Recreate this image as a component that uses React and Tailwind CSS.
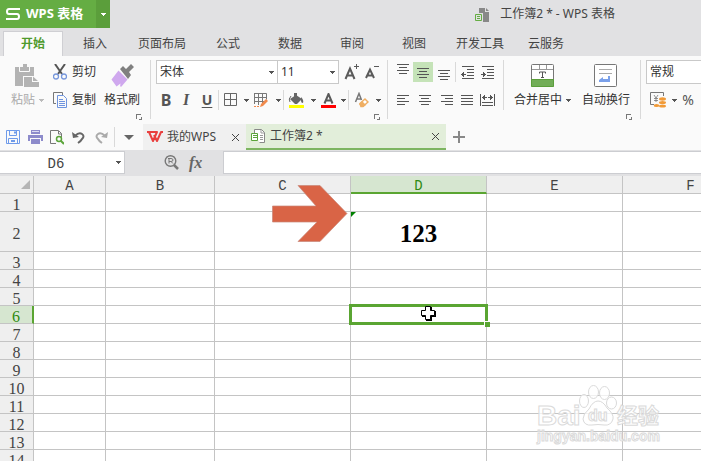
import React from "react";

function Caret({ className = "text-[#555]" }) {
  return (
    <svg width="5" height="3" viewBox="0 0 5 3" className={`shrink-0 ${className}`} fill="currentColor" shapeRendering="crispEdges">
      <path d="M0 0h5v1H4v1H3v1H2V2H1V1H0z" />
    </svg>
  );
}

function Sep({ className = "h-5" }) {
  return <div className={`w-px shrink-0 bg-[#d9d9d9] ${className}`} />;
}

function Launcher({ label }) {
  return (
    <button aria-label={label} className="absolute bottom-[2px] right-2 text-[#777]">
      <svg width="6" height="6" viewBox="0 0 6 6" fill="none" stroke="currentColor" shapeRendering="crispEdges">
        <path d="M.5 5V.5H5M2.500 5.500H5.500V2.500" />
      </svg>
    </button>
  );
}

function Tool({ label, children, className = "w-5 h-5" }) {
  return (
    <button aria-label={label} className={`flex shrink-0 items-center justify-center ${className}`}>
      {children}
    </button>
  );
}

function Lines({ rows, width = 12, height = 11 }) {
  return (
    <svg width={width} height={height} viewBox={`0 0 ${width} ${height}`} fill="#555" shapeRendering="crispEdges">
      {rows.map(([x, y, w], i) => (
        <rect key={i} x={x} y={y} width={w} height="1" />
      ))}
    </svg>
  );
}

function Indent({ out }) {
  return (
    <svg width="14" height="13" viewBox="0 0 14 13" fill="#555" shapeRendering="crispEdges">
      <path d="M1 0h12v1H1zM6 3h7v1H6zM6 6h7v1H6zM6 9h7v1H6zM1 12h12v1H1z" />
      {out ? <path d="M0 8h1V7h1V6h1v2h2v1H3v2H2v-1H1V9H0z" /> : <path d="M5 8H4V7H3V6H2v2H0v1h2v2h1v-1h1V9h1z" />}
    </svg>
  );
}

function TitleBar() {
  return (
    <header className="relative flex h-7 shrink-0 items-start bg-[#e1e1e3]">
      <button className="flex h-7 w-24 items-center gap-1.5 whitespace-nowrap bg-[#65ad43] pl-1.5 text-[13px] font-bold text-white">
        <svg width="14" height="12" viewBox="0 0 14 12" fill="none" stroke="#fff" strokeWidth="2">
          <path d="M14 1H3Q1 1 1 3.500T3 6H11Q13 6 13 8.500T11 11H0" />
        </svg>
        WPS 表格
      </button>
      <button aria-label="菜单" className="flex h-7 w-3.5 items-center justify-center bg-[#5b9e3b]">
        <Caret className="text-white" />
      </button>
      <div className="flex h-7 flex-1 items-center justify-end gap-2.5 pr-[86px] text-[#444]">
        <svg width="15" height="15" viewBox="0 0 15 15">
          <path d="M4 1h6v4h4v10H8V6H4z" fill="#888" />
          <path d="M11 1l3 3h-3z" fill="#888" />
          <path d="M.5 7.500h6v6h-6zM2 9.500h3M2 11.500h3" fill="none" stroke="#65ad43" />
        </svg>
        <h1>工作簿2 * - WPS 表格</h1>
      </div>
    </header>
  );
}

const tabs = [
  ["插入", "w-16"],
  ["页面布局", "w-[70px]"],
  ["公式", "w-[62px]"],
  ["数据", "w-[62px]"],
  ["审阅", "w-[62px]"],
  ["视图", "w-[62px]"],
  ["开发工具", "w-[70px]"],
  ["云服务", "w-[62px]"],
];

function Tabs() {
  return (
    <nav className="flex h-7 shrink-0 items-end bg-[#e1e1e3] pl-[3px] text-[#444]">
      <button className="h-[25px] w-[60px] border border-b-0 border-[#cfcfd3] bg-[#fafafa] font-bold text-[#4f9a2d]">开始</button>
      {tabs.map(([t, w]) => (
        <button key={t} className={`h-[25px] whitespace-nowrap ${w}`}>{t}</button>
      ))}
    </nav>
  );
}

function ClipboardGroup() {
  return (
    <section className="relative flex w-[150px] shrink-0 text-[#333]">
      <button className="flex w-11 shrink-0 flex-col items-end pt-2 text-[#aaa]">
        <svg width="24" height="24" viewBox="0 0 24 24" className="mr-[5px]">
          <path d="M0 3h19v9H8v10H0z" fill="#b3b3b3" />
          <path d="M4.500 2v5.500h10V2" fill="none" stroke="#fafafa" />
          <path d="M5 3h3V0h4v3h2v4H5z" fill="#b3b3b3" />
          <path d="M9 13h8v5h7v5H9z" fill="#b3b3b3" />
          <path d="M18 12.500l5 4.500h-5z" fill="#b3b3b3" />
        </svg>
        <span className="flex h-6 items-center gap-1">粘贴<Caret className="text-[#bbb]" /></span>
      </button>
      <div className="flex w-[53px] flex-col gap-1 pl-[9px] pt-1">
        <button className="flex h-6 items-center gap-[5px] whitespace-nowrap">
          <svg width="14" height="16" viewBox="0 0 14 16" fill="none" className="shrink-0">
            <path d="M2 0l7 10M12 0L5 10" stroke="#555" strokeWidth="2" />
            <circle cx="3" cy="12.500" r="2.500" stroke="#7797dc" strokeWidth="1.300" />
            <circle cx="11" cy="12.500" r="2.500" stroke="#7797dc" strokeWidth="1.300" />
          </svg>
          剪切
        </button>
        <button className="flex h-6 items-center gap-[5px] whitespace-nowrap">
          <svg width="14" height="16" viewBox="0 0 14 16" fill="none" className="shrink-0">
            <path d="M3 11.500H.5V.5h9V3" stroke="#777" />
            <path d="M4.500 3.500h6l3 3v9h-9z" stroke="#6f94df" />
            <path d="M6 7.500h4M6 9.500h6M6 11.500h6M6 13.500h6" stroke="#6f94df" />
          </svg>
          复制
        </button>
      </div>
      <button className="flex w-[50px] flex-col items-center pt-2">
        <svg width="24" height="24" viewBox="0 0 24 24">
          <path d="M10 5l3-3 3 3 5-5 3 3-5 5 2 3-3 4z" fill="#808080" />
          <path d="M8.500 6.500l9 9-6 7q-2 1-1-3l-4 3-5-7z" fill="#cfa8ee" />
        </svg>
        <span className="flex h-6 items-center whitespace-nowrap">格式刷</span>
      </button>
      <Launcher label="剪贴板选项" />
    </section>
  );
}

function Combo({ label, value, className }) {
  return (
    <label className={`relative flex items-center border border-[#c9c9c9] bg-white ${className}`}>
      <select aria-label={label} className="h-full w-full appearance-none bg-transparent pl-[3px] text-[#333] outline-none">
        <option>{value}</option>
      </select>
      <Caret className="pointer-events-none absolute right-[3px] text-[#555]" />
    </label>
  );
}

function Drop({ label }) {
  return <Tool label={label} className="h-5 w-2.5"><Caret /></Tool>;
}

function FontGroup() {
  return (
    <section className="relative flex w-[237px] shrink-0 flex-col gap-1 pl-[5px] pt-1 text-[#555]">
      <div className="flex h-6 items-center">
        <Combo label="字体" value="宋体" className="h-6 w-[122px]" />
        <Combo label="字号" value="11" className="-ml-px h-6 w-[62px]" />
        <Tool label="增大字号" className="ml-[3px] h-6 w-5">
          <svg width="16" height="16" viewBox="0 0 16 16" fill="none" stroke="#5a5a5a">
            <path d="M1.500 15L6 4.500 10.500 15M3 11.500h6" strokeWidth="2" />
            <path d="M10 2.500h5M12.500 0v5" />
          </svg>
        </Tool>
        <Tool label="减小字号" className="h-6 w-5">
          <svg width="14" height="16" viewBox="0 0 14 16" fill="none" stroke="#5a5a5a">
            <path d="M1 14L5 5.500 9 14M2.500 11.500h5" strokeWidth="2" />
            <path d="M9 2.500h5" />
          </svg>
        </Tool>
      </div>
      <div className="flex h-6 items-center">
        <Tool label="加粗"><b className="text-base">B</b></Tool>
        <Tool label="倾斜"><i className="font-['Liberation_Serif',serif] text-base font-bold">I</i></Tool>
        <Tool label="下划线" className="h-5 w-[22px]"><b className="text-sm underline underline-offset-2">U</b></Tool>
        <Sep />
        <Tool label="边框" className="h-5 w-6">
          <svg width="14" height="14" viewBox="0 0 14 14" fill="none" stroke="#666"><path d="M.5.5h12v12H.5zM6.500 0v13M0 6.500h13" /></svg>
        </Tool>
        <Tool label="边框样式" className="h-5 w-1.5"><Caret /></Tool>
        <Tool label="绘制边框" className="h-5 w-6">
          <svg width="16" height="15" viewBox="0 0 16 15" fill="none">
            <path d="M1.500.5h12v6M1.500 0v11M1 4.500h12M1 8.500h10M5.500 0v12M9.500 0v11" stroke="#777" />
            <path d="M7 14l1-3 5-5 2 2-5 5z" fill="#f18a4c" />
            <path d="M1 13.500h2M4 13.500h2" stroke="#f18a4c" />
          </svg>
        </Tool>
        <Drop label="绘制选项" />
        <Sep />
        <Tool label="填充颜色" className="h-5 w-6">
          <svg width="16" height="15" viewBox="0 0 16 15">
            <path d="M2 6l6-4 6 4-5 5H7z" fill="#666" />
            <path d="M6 0h3v6H6z" fill="#666" />
            <path d="M3 3q-3 3-1 6" fill="none" stroke="#666" />
            <path d="M13 4q3 3 2 6-2 0-2-2z" fill="#666" />
            <path d="M1 12h15v3H1z" fill="#ff0" />
          </svg>
        </Tool>
        <Drop label="填充选项" />
        <Tool label="字体颜色" className="h-5 w-5">
          <svg width="15" height="15" viewBox="0 0 15 15">
            <path d="M3.500 10.500L7.500 1l4 9.500M5 7.500h5" fill="none" stroke="#5a5a5a" strokeWidth="2" />
            <path d="M0 12h15v3H0z" fill="red" />
          </svg>
        </Tool>
        <Drop label="颜色选项" />
        <Sep />
        <Tool label="清除格式" className="h-5 w-6">
          <svg width="15" height="16" viewBox="0 0 15 16" fill="none">
            <path d="M1.500 10L5 1.500 7.500 8M3 7h4" stroke="#777" strokeWidth="1.500" />
            <path d="M6 11.500L11 7l3 3-5 4.500H7z" fill="#fff" stroke="#efae62" strokeWidth="1.500" />
            <path d="M8 9l4 4-3 2H7l-2-3z" fill="#efae62" />
          </svg>
        </Tool>
        <Drop label="清除选项" />
      </div>
      <Launcher label="字体选项" />
    </section>
  );
}

function AlignGroup() {
  return (
    <section className="flex w-[116px] shrink-0 flex-col gap-1 pl-[5px] pt-1">
      <div className="flex h-6 items-center">
        <Tool label="顶端对齐"><Lines rows={[[0, 0, 12], [2, 3, 8], [0, 6, 12], [2, 9, 8]]} height={16} /></Tool>
        <Tool label="垂直居中" className="h-5 w-5 bg-[#c5e3b8]"><Lines rows={[[0, 1, 12], [2, 4, 8], [0, 7, 12], [2, 10, 8]]} /></Tool>
        <Tool label="底端对齐" className="h-5 w-[22px]"><Lines rows={[[0, 6, 12], [2, 9, 8], [0, 12, 12], [2, 15, 8]]} height={16} /></Tool>
        <Sep />
        <Tool label="减少缩进" className="ml-0.5 h-5 w-5"><Indent out /></Tool>
        <Tool label="增加缩进"><Indent /></Tool>
      </div>
      <div className="flex h-6 items-center">
        <Tool label="左对齐"><Lines rows={[[0, 0, 12], [0, 3, 8], [0, 6, 12], [0, 9, 8]]} height={10} /></Tool>
        <Tool label="居中" className="h-5 w-6"><Lines rows={[[0, 0, 12], [2, 3, 8], [0, 6, 12], [2, 9, 8]]} height={10} /></Tool>
        <Tool label="右对齐"><Lines rows={[[0, 0, 12], [4, 3, 8], [0, 6, 12], [4, 9, 8]]} height={10} /></Tool>
        <Tool label="两端对齐"><Lines rows={[[0, 0, 12], [0, 3, 12], [0, 6, 12], [0, 9, 12]]} height={10} /></Tool>
        <Tool label="分散对齐">
          <svg width="15" height="12" viewBox="0 0 15 12" fill="#555" shapeRendering="crispEdges">
            <path d="M0 0h1v12H0zM14 0h1v12h-1zM2 8h11v1H2zM2 11h11v1H2zM2 3h1V2h1V1h1v2h2v1H5v2H4V5H3V4H2zM13 3h-1V2h-1V1h-1v2H8v1h2v2h1V5h1V4h1z" />
          </svg>
        </Tool>
      </div>
    </section>
  );
}

function CellGroup() {
  return (
    <section className="relative flex w-[136px] shrink-0 gap-2 pl-2.5 text-[#333]">
      <button className="flex w-[60px] flex-col pt-2">
        <svg width="24" height="24" viewBox="0 0 24 24" className="ml-[17px]">
          <rect x=".5" y=".5" width="22" height="22" rx="1" fill="#fff" stroke="#777" />
          <path d="M1 5.500h21M8.500 1v4M15.500 1v4" stroke="#999" />
          <path d="M.5 15.500h22v7H.5z" fill="#72ad58" stroke="#5b9e3b" />
          <path d="M8.500 9.500V8h6v1.500M11.500 8v5.500M10 13.500h3" fill="none" stroke="#555" />
        </svg>
        <span className="flex h-6 items-center gap-1 whitespace-nowrap">合并居中<Caret /></span>
      </button>
      <button className="flex w-12 flex-col items-center pt-2">
        <svg width="24" height="24" viewBox="0 0 24 24" fill="none">
          <rect x=".5" y=".5" width="22" height="22" rx="1" fill="#fff" stroke="#777" />
          <path d="M5 5.500h13M5 9.500h13" stroke="#aaa" />
          <path d="M5 16l4-3v2h5v-3h2v6H5z" fill="#7aa0ea" />
        </svg>
        <span className="flex h-6 items-center whitespace-nowrap">自动换行</span>
      </button>
      <Launcher label="对齐选项" />
    </section>
  );
}

function NumberGroup() {
  return (
    <section className="flex flex-1 flex-col gap-1 overflow-hidden pl-[5px] pt-1">
      <Combo label="数字格式" value="常规" className="h-6 w-[100px] shrink-0" />
      <div className="flex h-6 items-center">
        <Tool label="货币" className="h-5 w-6">
          <svg width="17" height="16" viewBox="0 0 17 16" fill="none">
            <path d="M4 12.500H.5V.5h13V4" stroke="#777" />
            <path d="M4 3l2 3 2-3M6 6v4M4 6.500h4M4 8.500h4" stroke="#777" strokeWidth=".8" />
            <ellipse cx="12.500" cy="7" rx="3.500" ry="1.700" fill="#f19a37" />
            <ellipse cx="12.500" cy="10.500" rx="3.500" ry="1.500" fill="#f19a37" />
            <ellipse cx="12.500" cy="14" rx="3.500" ry="1.600" fill="#f19a37" />
            <ellipse cx="6.500" cy="13.500" rx="2.800" ry="1.600" fill="#f19a37" />
          </svg>
        </Tool>
        <Tool label="货币选项" className="h-5 w-2"><Caret /></Tool>
        <Tool label="百分比"><span className="text-sm text-[#555]">%</span></Tool>
      </div>
    </section>
  );
}

function Close({ label }) {
  return (
    <button aria-label={label} className="ml-auto mr-1.5">
      <svg width="9" height="9" viewBox="0 0 9 9" stroke="#444"><path d="M1 1l7 7M8 1L1 8" /></svg>
    </button>
  );
}

function QuickBar() {
  return (
    <div className="flex h-7 shrink-0 items-end bg-[#fafafa] text-[#444]">
      <div className="flex h-[26px] w-[143px] shrink-0 items-center pl-0.5">
        <Tool label="保存" className="h-5 w-[22px]">
          <svg width="14" height="14" viewBox="0 0 14 14" fill="none" stroke="#6f9bea">
            <path d="M.5.5h13v13H.5zM3.500 1v4.500h7V1M2.500 13V8.500h9V13" /><path d="M8 2.500h2M5 11h4" strokeWidth="2" />
          </svg>
        </Tool>
        <Tool label="打印" className="h-5 w-[22px]">
          <svg width="15" height="14" viewBox="0 0 15 14"><path d="M3 0h9v4H3zM0 5h15v6h-2V8H2v3H0zM3 9h9v5H3z" fill="#8d8bcb" /><path d="M4 1.500h7" stroke="#dcdcf2" /></svg>
        </Tool>
        <Tool label="打印预览" className="h-5 w-[22px]">
          <svg width="14" height="15" viewBox="0 0 14 15" fill="none">
            <path d="M6 13.500H.5V.5h8l3 3V7M8.500 1v3h3" stroke="#777" /><circle cx="9" cy="9" r="2.500" stroke="#5ba43a" strokeWidth="1.500" /><path d="M11 11l3 3" stroke="#5ba43a" strokeWidth="2" />
          </svg>
        </Tool>
        <Tool label="撤销" className="h-5 w-[22px]">
          <svg width="14" height="13" viewBox="0 0 14 13" fill="none"><path d="M3 5q4-4 7-2t0 5q-1 2-4 4" stroke="#666" strokeWidth="2" /><path d="M0 1l1 6 6-1z" fill="#666" /></svg>
        </Tool>
        <Tool label="恢复" className="h-5 w-[22px]">
          <svg width="14" height="13" viewBox="0 0 14 13" fill="none"><path d="M11 5Q7 1 4 3t0 5q1 2 4 4" stroke="#aaa" strokeWidth="2" /><path d="M14 1l-1 6-6-1z" fill="#aaa" /></svg>
        </Tool>
        <div className="w-1" />
        <Sep />
        <Tool label="更多" className="h-5 w-7"><svg width="10" height="5" viewBox="0 0 10 5"><path d="M0 0h10L5 5z" fill="#666" /></svg></Tool>
      </div>
      <div className="flex h-[26px] w-[103px] shrink-0 items-center gap-1 bg-[#f0f0f0] pl-1">
        <svg width="16" height="12" viewBox="0 0 16 12" fill="none" stroke="#e9403f" strokeWidth="2">
          <path d="M0 1h10L6 10 2 1M7 4l3 6 4-9h2" strokeLinejoin="round" />
        </svg>
        <span className="whitespace-nowrap">我的WPS</span>
        <Close label="关闭我的WPS" />
      </div>
      <div className="flex h-[26px] w-[200px] shrink-0 items-center gap-1 border-b-2 border-[#7db561] bg-[#e2eeda] pl-[5px]">
        <svg width="15" height="15" viewBox="0 0 15 15" fill="none">
          <path d="M3.500 4V.5h7l3 3v10h-5" fill="#fff" stroke="#888" /><path d="M10 1v3h3M9 6.500h3M9 8.500h3M9 10.500h3" stroke="#999" />
          <path d="M.5 4.500h6v7h-6zM2 6.500h4M2 8.500h4" fill="#fff" stroke="#5ba43a" />
        </svg>
        <span>工作簿2 *</span>
        <Close label="关闭工作簿2" />
      </div>
      <Tool label="新建" className="h-[26px] w-[26px]">
        <svg width="12" height="12" viewBox="0 0 12 12" stroke="#888" strokeWidth="2"><path d="M0 6h12M6 0v12" /></svg>
      </Tool>
    </div>
  );
}

const mono = "font-['Liberation_Mono',monospace]";

function FormulaBar() {
  return (
    <div className="flex h-[26px] shrink-0 bg-[#e1e1e3] pb-0.5 pt-px">
      <label className="relative flex w-[125px] shrink-0 items-center border border-l-0 border-[#cccdd1] bg-white">
        <input aria-label="名称框" defaultValue="D6" className={`h-5 w-full bg-transparent pr-3 pt-0.5 text-center text-sm text-[#444] outline-none ${mono}`} />
        <Caret className="absolute right-[3px] text-[#555]" />
      </label>
      <div className="flex w-[98px] shrink-0 items-center gap-2.5 pl-[39px]">
        <button aria-label="查找">
          <svg width="15" height="15" viewBox="0 0 15 15" fill="none" stroke="#777">
            <circle cx="6.500" cy="6" r="5.300" strokeWidth="1.400" /><path d="M10 10l4 4" strokeWidth="2.500" /><path d="M4 3.500h3q2 0 2 1.500T7 6.500H5M5 3.500v5M7 6.500l2 2" />
          </svg>
        </button>
        <button aria-label="插入函数" className="font-['Liberation_Serif',serif] text-base font-bold italic text-[#666]">fx</button>
      </div>
      <input aria-label="编辑栏" className="min-w-0 flex-1 border border-r-0 border-[#cccdd1] bg-white outline-none" />
    </div>
  );
}

const cols = ["A", "B", "C", "D", "E", "F"];
const rows = [1, 2, 3, 4, 5, 6, 7, 8, 9, 10, 11, 12, 13, 14];

function Cell({ col, row }) {
  const key = col + row;
  return (
    <td className="relative border-b border-r border-[#c4c4c4] bg-white p-0 text-center align-middle">
      {key === "D2" && (
        <>
          <svg width="5" height="5" viewBox="0 0 5 5" className="absolute left-0 top-0"><path d="M0 0h5L0 5z" fill="#008000" /></svg>
          <span className="block pt-1 font-['Liberation_Serif',serif] text-[25px] font-bold leading-7 text-black">123</span>
        </>
      )}
      {key === "D6" && (
        <>
          <div className="absolute -inset-0.5 z-10 border-[3px] border-[#5aa532]" />
          <div className="absolute -bottom-1 -right-1 z-10 size-1.5 border-l border-t border-white bg-[#5aa532]" />
          <svg width="16" height="16" viewBox="0 0 16 16" className="absolute -top-px left-[69px] z-20">
            <path d="M6 2h6v4h4v6h-4v4H6v-4H2V6h4z" fill="#000" />
            <path d="M5.500 1.500h5v4h4v5h-4v4h-5v-4h-4v-5h4z" fill="#fff" stroke="#000" />
          </svg>
        </>
      )}
    </td>
  );
}

function Watermark() {
  return (
    <svg width="130" height="70" viewBox="0 0 130 70" className="pointer-events-none absolute bottom-2 right-9" fill="#fff" fillOpacity=".75" stroke="#dadada">
      <text x="2" y="42" fontSize="28" fontWeight="700" fontFamily="Liberation Sans">Bai</text>
      <ellipse cx="49" cy="18" rx="4.500" ry="6.500" /><ellipse cx="58.500" cy="9" rx="5" ry="6.500" />
      <ellipse cx="69.500" cy="10" rx="5" ry="6.500" /><ellipse cx="76.500" cy="20" rx="5" ry="6" />
      <path d="M63 18q5 0 9 7 7 6 6 11-2 7-9 6-6-1-12 0-8 1-9-6 0-5 6-10 4-8 9-8z" />
      <text x="53" y="38" fontSize="16" fontWeight="700" fontFamily="Liberation Sans">du</text>
      <text x="82" y="40" fontSize="21" fontWeight="700" fontFamily="Noto Sans CJK SC">经验</text>
      <text x="2" y="58" fontSize="14" fontWeight="700" fontFamily="Liberation Sans">jingyan.baidu.com</text>
    </svg>
  );
}

function Sheet() {
  return (
    <main className="relative min-h-0 flex-1 overflow-hidden bg-white">
      <table className="w-[759px] table-fixed border-separate border-spacing-0 leading-4">
        <colgroup>
          <col className="w-[34px]" />
          <col className="w-[72px]" />
          <col className="w-[109px]" />
          <col className="w-[136px]" />
          <col className="w-[136px]" />
          <col className="w-[136px]" />
          <col className="w-[136px]" />
        </colgroup>
        <thead className={`text-sm leading-3 text-[#444] ${mono}`}>
          <tr className="h-[18px]">
            <th className="border-b border-r border-[#c4c4c4] bg-[#efefef] p-0">
              <svg width="9" height="9" viewBox="0 0 9 9" className="ml-auto mr-[3px]"><path d="M9 0v9H0z" fill="#b5b5b5" /></svg>
            </th>
            {cols.map((c) => (
              <th
                key={c}
                className={
                  c === "D"
                    ? "border-b-2 border-r border-b-[#5aa532] border-r-[#c4c4c4] bg-[#d6e6d0] p-0 pt-1 align-top font-normal text-[#2f8a10]"
                    : "border-b border-r border-[#c4c4c4] bg-[#efefef] p-0 pt-1 align-top font-normal"
                }
              >
                {c}
              </th>
            ))}
          </tr>
        </thead>
        <tbody>
          {rows.map((r) => (
            <tr key={r} className={r === 2 ? "h-10" : "h-[18px]"}>
              <th
                className={`p-0 pt-1 text-base font-normal leading-3 font-['Liberation_Serif',serif] ${
                  r === 6
                    ? "border-b border-r-2 border-b-[#c4c4c4] border-r-[#5aa532] bg-[#d6e6d0] text-[#2f8a10]"
                    : "border-b border-r border-[#c4c4c4] bg-[#efefef] text-[#444]"
                }`}
              >
                {r}
              </th>
              {cols.map((c) => <Cell key={c} col={c} row={r} />)}
            </tr>
          ))}
        </tbody>
      </table>
      <svg width="76" height="58" viewBox="0 0 76 58" className="absolute left-[272px] top-[9px]">
        <path d="M.5 21H44L26 .5H48L75 28.500 48 56.500H26L45 37H.5z" fill="#d96446" stroke="#c9887a" strokeWidth=".7" />
      </svg>
      <Watermark />
    </main>
  );
}

export default function App() {
  return (
    <div className="flex h-screen w-full flex-col overflow-hidden bg-[#fafafa] font-['Noto_Sans','Noto_Sans_CJK_SC',sans-serif] text-xs">
      <TitleBar />
      <Tabs />
      <div className="flex h-[66px] shrink-0 overflow-hidden bg-[#fafafa]">
        <ClipboardGroup />
        <Sep className="mt-1 h-[59px]" />
        <FontGroup />
        <Sep className="-ml-px mt-1 h-[59px]" />
        <AlignGroup />
        <Sep className="-ml-px mt-1 h-[50px]" />
        <CellGroup />
        <Sep className="mt-1 h-[59px]" />
        <NumberGroup />
      </div>
      <QuickBar />
      <FormulaBar />
      <Sheet />
    </div>
  );
}
